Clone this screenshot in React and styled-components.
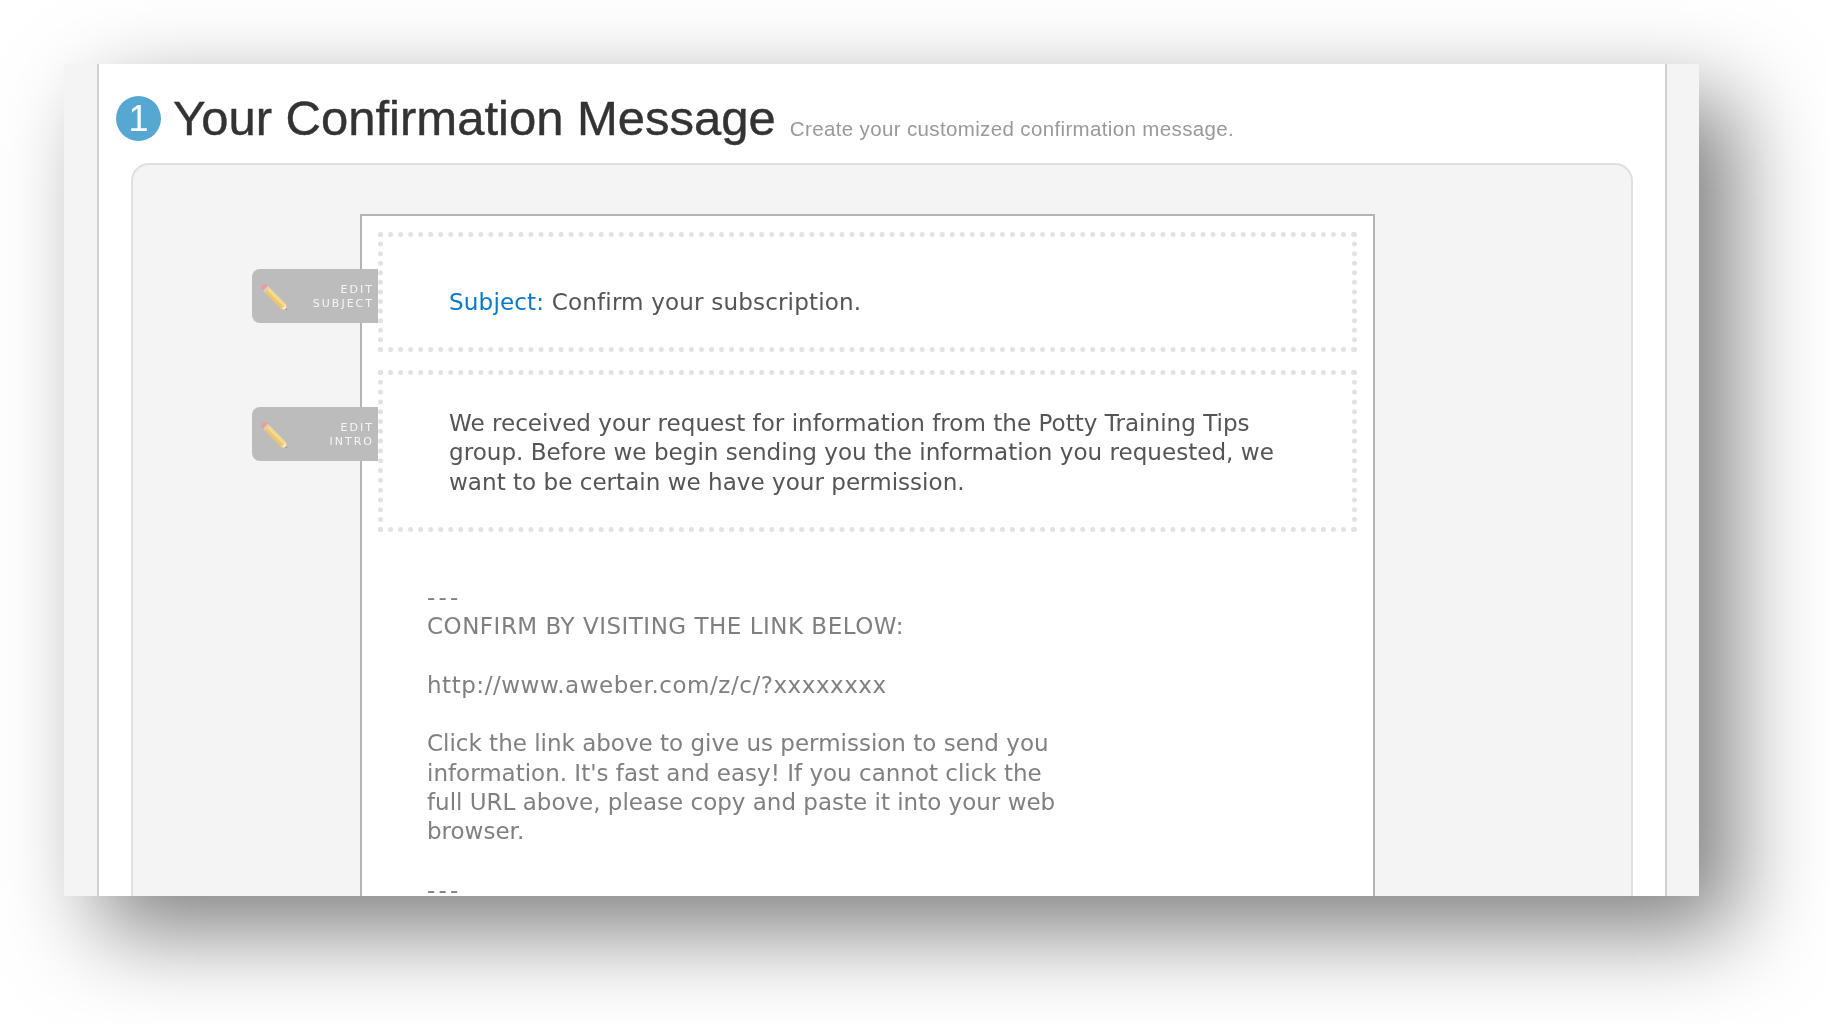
import React from 'react';
import styled, { createGlobalStyle } from 'styled-components';

const GlobalStyle = createGlobalStyle`
    html, body {
        margin: 0;
        padding: 0;
        background: #fff;
    }
    body {
        width: 1828px;
        height: 1024px;
        overflow: hidden;
    }
`;

const Page = styled.div`
    padding: 64px 0 0 64px;
`;

const Window = styled.div`
    width: 1635px;
    height: 832px;
    display: flex;
    background: #f4f4f4;
    overflow: hidden;
    box-shadow: 35px 35px 85px rgba(0, 0, 0, 0.5);
`;

const Main = styled.div`
    width: 1570px;
    flex: none;
    margin-left: 33px;
    background: #fff;
    border-left: 2px solid #d0d0d0;
    border-right: 2px solid #d0d0d0;
    padding-left: 32px;
    box-sizing: border-box;
    filter: blur(0.4px);
`;

const Header = styled.div`
    display: flex;
    align-items: center;
    height: 99px;
    box-sizing: border-box;
    padding-top: 9px;
    margin-left: -15px;
`;

const StepBadge = styled.div`
    width: 45px;
    height: 45px;
    flex: none;
    border-radius: 50%;
    background: #57a7d3;
    color: #fff;
    font: 36px/45px "Liberation Sans", Arial, sans-serif;
    text-align: center;
    margin-right: 12px;
`;

const Title = styled.h1`
    margin: 0;
    font: 400 49px/60px "Liberation Sans", Arial, sans-serif;
    -webkit-text-stroke: 0.4px #333;
    color: #333;
    white-space: nowrap;
`;

const Subtitle = styled.span`
    margin: 21px 0 0 14px;
    font: 400 20.5px/30px "Liberation Sans", Arial, sans-serif;
    letter-spacing: 0.36px;
    color: #999;
    white-space: nowrap;
`;

const Panel = styled.div`
    width: 1502px;
    height: 900px;
    box-sizing: border-box;
    background: #f4f4f4;
    border: 2px solid #e0e0e0;
    border-radius: 18px;
    padding: 49px 0 0 227px;
`;

const EmailBox = styled.div`
    width: 1015px;
    height: 800px;
    box-sizing: border-box;
    background: #fff;
    border: 2px solid #b4b4b4;
    padding: 16px 16px 0 16px;
`;

const EditableBlock = styled.div`
    position: relative;
    height: ${props => props.$height}px;
    box-sizing: border-box;
    border: 5px dotted #e2e2e2;
    margin-bottom: 18px;
    padding: ${props => props.$pad}px 0 0 66px;
    font: 23.08px/29.3px "DejaVu Sans", Verdana, sans-serif;
    color: #555;
    white-space: nowrap;
`;

const EditTab = styled.div`
    position: absolute;
    left: -131px;
    top: 32px;
    width: 126px;
    height: 54px;
    background: #bcbcbc;
    border-radius: 8px 0 0 8px;
`;

const TabLabel = styled.div`
    position: absolute;
    right: 4px;
    top: 14px;
    text-align: right;
    font: 400 11px/14px "DejaVu Sans", Verdana, sans-serif;
    letter-spacing: 2px;
    color: #f6f6f6;
`;

const PencilIcon = styled.svg`
    position: absolute;
    left: 8px;
    top: 14px;
`;

const SubjectLine = styled.span`
    letter-spacing: 0.15px;
`;

const SubjectLabel = styled.span`
    color: #0a78c8;
`;

const BodyText = styled.div`
    margin: 51px 0 0 49px;
`;

const BodyLine = styled.div`
    height: 29.3px;
    font: 23px/29.3px "DejaVu Sans", Verdana, sans-serif;
    letter-spacing: ${props => props.$spacing || 0}px;
    color: #808080;
    white-space: nowrap;
`;

const bodyLines = [
    { text: '---', spacing: 3.2 },
    { text: 'CONFIRM BY VISITING THE LINK BELOW:', spacing: 0.5 },
    { text: '' },
    { text: 'http://www.aweber.com/z/c/?xxxxxxxx', spacing: 0.54 },
    { text: '' },
    { text: 'Click the link above to give us permission to send you' },
    { text: "information. It's fast and easy! If you cannot click the" },
    { text: 'full URL above, please copy and paste it into your web' },
    { text: 'browser.' },
    { text: '' },
    { text: '---', spacing: 3.2 },
];

const Pencil = () => (
    <PencilIcon width="28" height="28" viewBox="0 0 27 27">
        <path d="M7.5 3 L25 20.5 L26 26 L20.5 25 L3 7.5 Z" fill="#efc66e" />
        <path d="M5.2 5.2 L22.8 22.8 L25 20.5 L7.5 3 Z" fill="#f5d98f" />
        <path d="M7.5 3 L3 7.5 L1.5 6 C0 3.5 3.5 0 6 1.5 Z" fill="#ec9c9c" />
        <path d="M7.5 3 L3 7.5 L4.5 9 L9 4.5 Z" fill="#d6d0c0" />
        <path d="M20.5 25 L26 26 L25 20.5 Z" fill="#f6e6c8" />
        <path d="M24 25.6 L26 26 L25.6 24 Z" fill="#8a7a60" />
    </PencilIcon>
);

const Tab = ({ lines }) => (
    <EditTab>
        <Pencil />
        <TabLabel>{lines[0]}<br />{lines[1]}</TabLabel>
    </EditTab>
);

const App = () => (
    <Page>
        <GlobalStyle />
        <Window>
            <Main>
                <Header>
                    <StepBadge>1</StepBadge>
                    <Title>Your Confirmation Message</Title>
                    <Subtitle>Create your customized confirmation message.</Subtitle>
                </Header>
                <Panel>
                    <EmailBox>
                        <EditableBlock $height={120} $pad={51}>
                            <Tab lines={['EDIT', 'SUBJECT']} />
                            <SubjectLine><SubjectLabel>Subject:</SubjectLabel> Confirm your subscription.</SubjectLine>
                        </EditableBlock>
                        <EditableBlock $height={162} $pad={34}>
                            <Tab lines={['EDIT', 'INTRO']} />
                            We received your request for information from the Potty Training Tips<br />
                            group. Before we begin sending you the information you requested, we<br />
                            want to be certain we have your permission.
                        </EditableBlock>
                        <BodyText>
                            {bodyLines.map((line, i) => (
                                <BodyLine key={i} $spacing={line.spacing}>{line.text}</BodyLine>
                            ))}
                        </BodyText>
                    </EmailBox>
                </Panel>
            </Main>
        </Window>
    </Page>
);

export default App;
